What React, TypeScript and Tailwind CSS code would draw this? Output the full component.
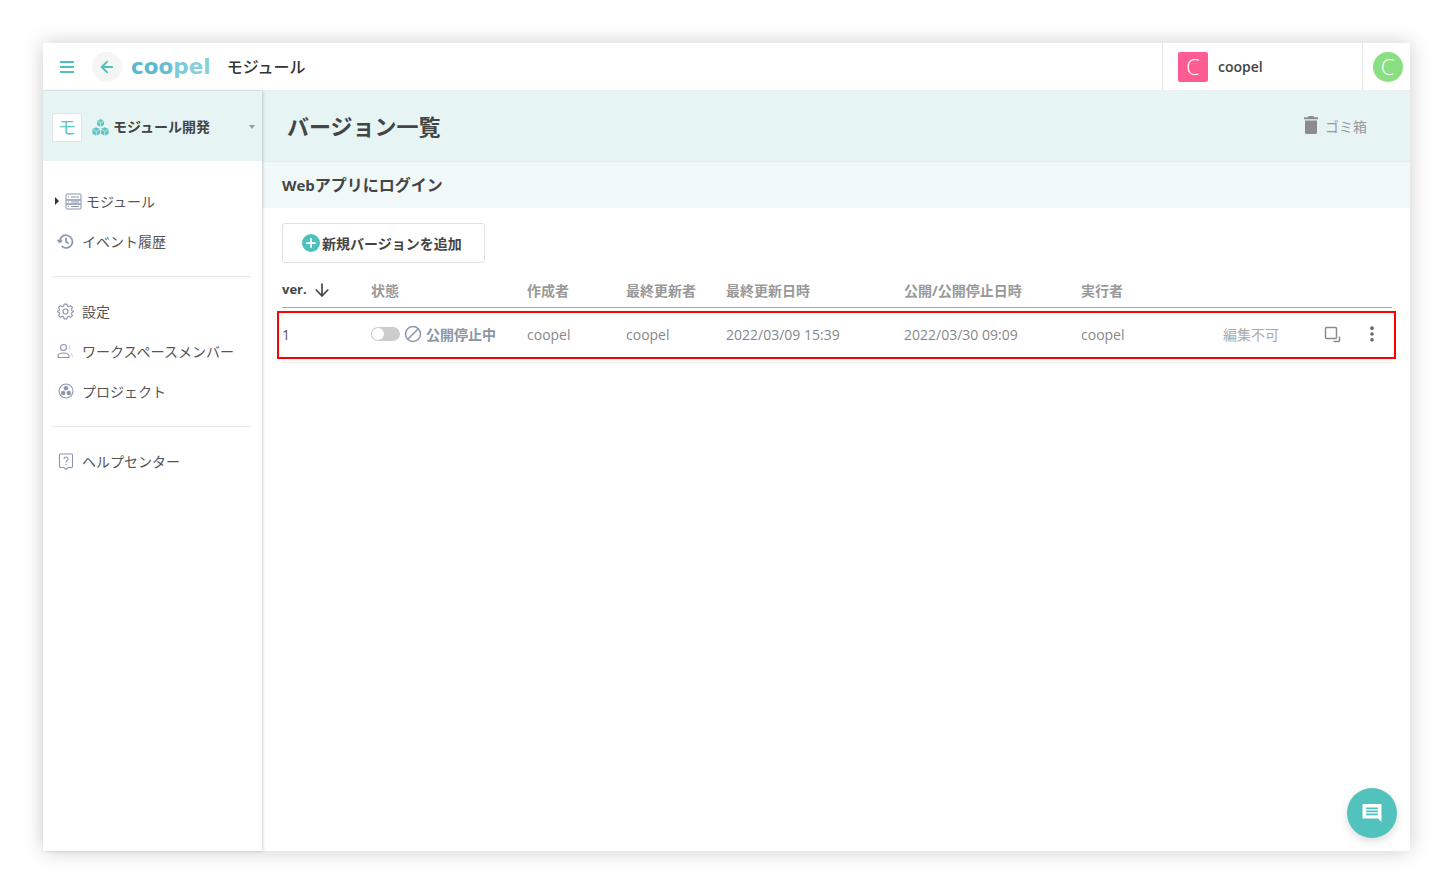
import { ArrowDown, ArrowLeft, Ban, MoreVertical, Plus } from "lucide-react";

const FONT = "font-['Open_Sans','Noto_Sans_CJK_JP',sans-serif]";

function ListIcon() {
  return (
    <svg width="17" height="17" viewBox="0 0 17 17" fill="none" stroke="#8a97ad" strokeWidth="1">
      <rect x="1" y="1" width="15" height="6" rx="1" />
      <rect x="1" y="7" width="15" height="4" />
      <rect x="1" y="11" width="15" height="5" rx="1" />
      <path d="M3 4h1M6 4h8M3 9h1M6 9h8M3 13.500h1M6 13.500h8" />
    </svg>
  );
}

function HistoryIcon() {
  return (
    <svg width="17" height="17" viewBox="0 0 16 16" fill="none" stroke="#8a97ad" strokeWidth="1.600">
      <path d="M2.500 8a6 6 0 1 1 1.800 4.400" />
      <path d="M0.500 6.500 2.500 8.700 4.800 6.800" />
      <path d="M8.500 4.500V8.300L11 9.800" />
    </svg>
  );
}

function GearIcon() {
  return (
    <svg width="17" height="17" viewBox="0 0 24 24" fill="none" stroke="#8a97ad" strokeWidth="1.600" strokeLinejoin="round">
      <path d="M10 1.500h4l.6 2.800 2.200.9 2.400-1.500 2.700 2.700-1.500 2.400.9 2.200 2.700.6v0.800l-2.700.6-.9 2.200 1.500 2.400-2.700 2.700-2.400-1.500-2.200.9-.6 2.800h-4l-.6-2.800-2.200-.9-2.400 1.500-2.700-2.700 1.500-2.400-.9-2.200-2.700-.6v-.8l2.700-.6.9-2.200-1.500-2.400 2.700-2.700 2.400 1.500 2.200-.9z" />
      <circle cx="12" cy="12" r="3.500" />
    </svg>
  );
}

function MembersIcon() {
  return (
    <svg width="17" height="16" viewBox="0 0 17 16" fill="none" stroke="#8a97ad" strokeWidth="1.100">
      <circle cx="6.500" cy="4.500" r="3" />
      <path d="M1 14.500v-1.500c0-2 2-3 5.500-3s5.500 1 5.500 3v1.500z" />
      <path d="M12 2.500a2.500 2.500 0 0 1 0 4M14 10.500c1 .5 1.500 1.500 1.500 3.500" stroke="#cfd5de" />
    </svg>
  );
}

function ProjectIcon() {
  return (
    <svg width="16" height="16" viewBox="0 0 16 16" fill="#8a97ad" stroke="none">
      <circle cx="8" cy="8" r="7" fill="none" stroke="#8a97ad" strokeWidth="1.100" />
      <circle cx="8" cy="5.200" r="2.200" />
      <circle cx="5.200" cy="10" r="2.200" />
      <circle cx="10.800" cy="10" r="2.200" />
    </svg>
  );
}

function HelpIcon() {
  return (
    <svg width="16" height="17" viewBox="0 0 16 17" fill="none" stroke="#8a97ad" strokeWidth="1.100">
      <path d="M2.500 1h11a1 1 0 0 1 1 1v11.500a1 1 0 0 1-1 1H10L8 16.300 6 14.500H2.500a1 1 0 0 1-1-1V2a1 1 0 0 1 1-1z" />
      <path d="M6 6a2 2 0 1 1 3 1.700c-.7.400-1 .8-1 1.600M8 11v1" />
    </svg>
  );
}

function CubesIcon() {
  return (
    <svg width="17" height="17" viewBox="0 0 17 17" fill="#5cc6c2" className="block">
      <path d="M8.500 0 12 1.900v4.200L8.500 8 5 6.100V1.900z" />
      <path d="M4.300 8.200 8 10.100v4.600L4.300 16.800 .4 14.700v-4.600z" />
      <path d="M12.700 8.200l3.900 1.900v4.600l-3.900 2.100L9 14.700v-4.600z" />
      <path d="M5 2l3.500 1.900L12 2M8.500 3.900V8M.6 10.300l3.700 2 3.700-2M4.300 12.300V17M9 10.300l3.700 2 3.700-2M12.700 12.300V17" stroke="#e6f4f4" strokeWidth=".7" fill="none" />
    </svg>
  );
}

function NavItem({ icon, label, arrow }: { icon: React.ReactNode; label: string; arrow?: boolean }) {
  return (
    <div className={`flex h-10 items-center text-[14px] text-[#555] ${arrow ? "pl-[3px]" : "pl-[5px]"}`}>
      {arrow && <span className="mr-[6px] h-0 w-0 border-y-[4px] border-l-[4px] border-y-transparent border-l-[#333]" />}
      <span className={`flex w-[17px] justify-center ${arrow ? "mr-[4px]" : "mr-[8px]"}`}>{icon}</span>
      {label}
    </div>
  );
}

function Sidebar() {
  return (
    <aside className="z-10 flex w-[219px] shrink-0 flex-col bg-white shadow-[1px_0_3px_rgba(0,0,0,0.18)]">
      <div className="flex h-[70px] items-center bg-[#e6f4f4] pt-[2px] pr-[7px] pl-[9px]">
        <div className="flex h-[29px] w-[30px] items-center justify-center rounded-[2px] border border-[#e3e3e3] bg-white text-[18px] text-[#5cc6c2]">
          モ
        </div>
        <span className="ml-[10px]">
          <CubesIcon />
        </span>
        <span className="mb-[2px] ml-[4px] flex-1 text-[14px] font-bold text-[#444]">モジュール開発</span>
        <span className="h-0 w-0 border-x-[3px] border-t-[4px] border-x-transparent border-t-[#999]" />
      </div>
      <div className="flex flex-col pt-[20px] pr-[11px] pl-[9px]">
        <NavItem arrow icon={<ListIcon />} label="モジュール" />
        <NavItem icon={<HistoryIcon />} label="イベント履歴" />
        <div className="mt-[15px] mb-[14px] border-t border-[#e8e8e8]" />
        <NavItem icon={<GearIcon />} label="設定" />
        <NavItem icon={<MembersIcon />} label="ワークスペースメンバー" />
        <NavItem icon={<ProjectIcon />} label="プロジェクト" />
        <div className="mt-[15px] mb-[14px] border-t border-[#e8e8e8]" />
        <NavItem icon={<HelpIcon />} label="ヘルプセンター" />
      </div>
    </aside>
  );
}

function Header() {
  return (
    <header className="flex h-[48px] shrink-0 items-center border-b border-[#eeeeee] bg-white">
      <button className="ml-[17px] text-[#4fc1bd]">
        <svg width="14" height="12" viewBox="0 0 14 12" fill="currentColor" className="block">
          <rect width="14" height="2" />
          <rect y="5" width="14" height="2" />
          <rect y="10" width="14" height="2" />
        </svg>
      </button>
      <button className="ml-[18px] flex h-[30px] w-[30px] items-center justify-center rounded-full bg-[#f5f5f5] text-[#4fc1bd]">
        <ArrowLeft size={18} strokeWidth={2.400} />
      </button>
      <div className="ml-[9px] flex font-['DejaVu_Sans',sans-serif] text-[21.500px] leading-none font-bold">
        <span className="text-[#5cb8cc]">c</span>
        <span className="text-[#5cb8cc]">o</span>
        <span className="text-[#69bdd3]">o</span>
        <span className="text-[#7ccbd8]">p</span>
        <span className="text-[#86d0d8]">e</span>
        <span className="text-[#86d0d8]">l</span>
      </div>
      <span className="ml-[16px] text-[16px] font-medium text-[#333]">モジュール</span>
      <div className="ml-auto flex h-full w-[200px] items-center border-l border-[#e8e8e8] pl-[15px]">
        <div className="flex h-[30px] w-[30px] items-center justify-center rounded-[2px] bg-[#ff5c93] text-[22px] font-light text-white">C</div>
        <span className="ml-[10px] text-[14px] font-semibold text-[#444]">coopel</span>
      </div>
      <div className="flex h-full w-[48px] items-center justify-center border-l border-[#e8e8e8] pl-[2px]">
        <div className="flex h-[30px] w-[30px] items-center justify-center rounded-full bg-[#8adf82] text-[22px] font-light text-white">C</div>
      </div>
    </header>
  );
}

const COLS = "grid grid-cols-[89px_156px_99px_100px_178px_177px_142px_101px_48px_20px] items-center";

function VersionTable() {
  return (
    <div className="mt-[16px] w-[1110px]">
      <div className={`${COLS} h-[29px] border-b border-[#a9a9a9] pb-[6px] text-[14px] font-bold text-[#999]`}>
        <div className="flex items-center text-[13px] text-[#444]">
          ver.
          <ArrowDown size={20} className="ml-[5px]" strokeWidth={2} />
        </div>
        <div>状態</div>
        <div>作成者</div>
        <div>最終更新者</div>
        <div>最終更新日時</div>
        <div>公開/公開停止日時</div>
        <div>実行者</div>
      </div>
      <div className="relative">
        <div className={`${COLS} mt-[3px] h-[52px] border-b border-[#e6eeee] pb-[5px] text-[14px] text-[#888]`}>
          <div className="text-[#555]">1</div>
          <div className="flex items-center">
            <span className="flex h-[14px] w-[29px] items-center rounded-full bg-[#cccccc] pl-[1px]">
              <span className="h-[12px] w-[12px] rounded-full bg-white" />
            </span>
            <Ban size={18} className="ml-[4px] -scale-x-100 text-[#8a97ad]" strokeWidth={2} />
            <span className="ml-[4px] font-bold text-[#8b96a5]">公開停止中</span>
          </div>
          <div>coopel</div>
          <div>coopel</div>
          <div>2022/03/09 15:39</div>
          <div>2022/03/30 09:09</div>
          <div>coopel</div>
          <div className="text-[#aaa]">編集不可</div>
          <div>
            <svg width="17" height="17" viewBox="0 0 17 17" fill="none" stroke="#8c8c8c" strokeWidth="1.500">
              <rect x="1.500" y="1.500" width="11" height="11" rx="1" />
              <path d="M15.500 10.500v4a1 1 0 0 1-1 1h-5" />
            </svg>
          </div>
          <div className="flex justify-center text-[#666]">
            <MoreVertical size={20} strokeWidth={2.400} className="relative right-[10px]" />
          </div>
        </div>
        <div className="pointer-events-none absolute top-[0px] right-[-4px] bottom-[4px] left-[-5px] border-[2.500px] border-[#ff0000]" />
      </div>
    </div>
  );
}

export default function App() {
  return (
    <div className={`${FONT} h-[894px] bg-white p-[43px] pb-0`}>
      <div className="relative flex h-[808px] flex-col bg-white shadow-[0_0_20px_rgba(0,0,0,0.2)]">
        <Header />
        <div className="flex min-h-0 flex-1">
          <Sidebar />
          <main className="flex-1">
            <div className="flex h-[71px] items-center justify-between border-b border-[#dfeeee] bg-[#e6f4f4] pt-[1px] pr-[43px] pl-[25px]">
              <h1 className="text-[22px] font-bold text-[#444]">バージョン一覧</h1>
              <div className="flex items-center text-[14px] text-[#999]">
                <svg width="14" height="18" viewBox="0 0 14 18" fill="#8c8c8c" className="mr-[7px] mb-[3px]">
                  <path d="M4.500 0h5l.7 1.200H14v2H0v-2h3.800zM1 4.500h12V16.500a1.500 1.500 0 0 1-1.500 1.500h-9A1.500 1.500 0 0 1 1 16.500z" />
                </svg>
                ゴミ箱
              </div>
            </div>
            <div className="flex h-[46px] items-center bg-[#f0f8f8] pl-[20px] text-[16px] font-bold text-[#444]">
              <span className="text-[15px]">Web</span>アプリにログイン
            </div>
            <div className="pt-[15px] pl-[20px]">
              <button className="flex h-[40px] w-[203px] items-center rounded-[3px] border border-[#e2e2e2] pl-[19px] text-[14px] font-bold text-[#444]">
                <span className="mr-[2px] flex h-[18px] w-[18px] items-center justify-center rounded-full bg-[#4fc1bd] text-white">
                  <Plus size={14} strokeWidth={3} />
                </span>
                新規バージョンを追加
              </button>
              <VersionTable />
            </div>
          </main>
        </div>
        <button className="absolute right-[13px] bottom-[13px] flex h-[50px] w-[50px] items-center justify-center rounded-full bg-[#52c2bd] shadow-[0_3px_8px_rgba(0,0,0,0.15)]">
          <svg width="20" height="20" viewBox="0 0 20 20">
            <path d="M1 1h18a.5.5 0 0 1 .5.500V19L16 15.500H1a.5.5 0 0 1-.5-.500V1.500A.5.5 0 0 1 1 1z" fill="#fff" />
            <path d="M4 4.500h12v1.800H4zM4 7.500h12v1.800H4zM4 10.500h12v1.800H4z" fill="#52c2bd" />
          </svg>
        </button>
      </div>
    </div>
  );
}
